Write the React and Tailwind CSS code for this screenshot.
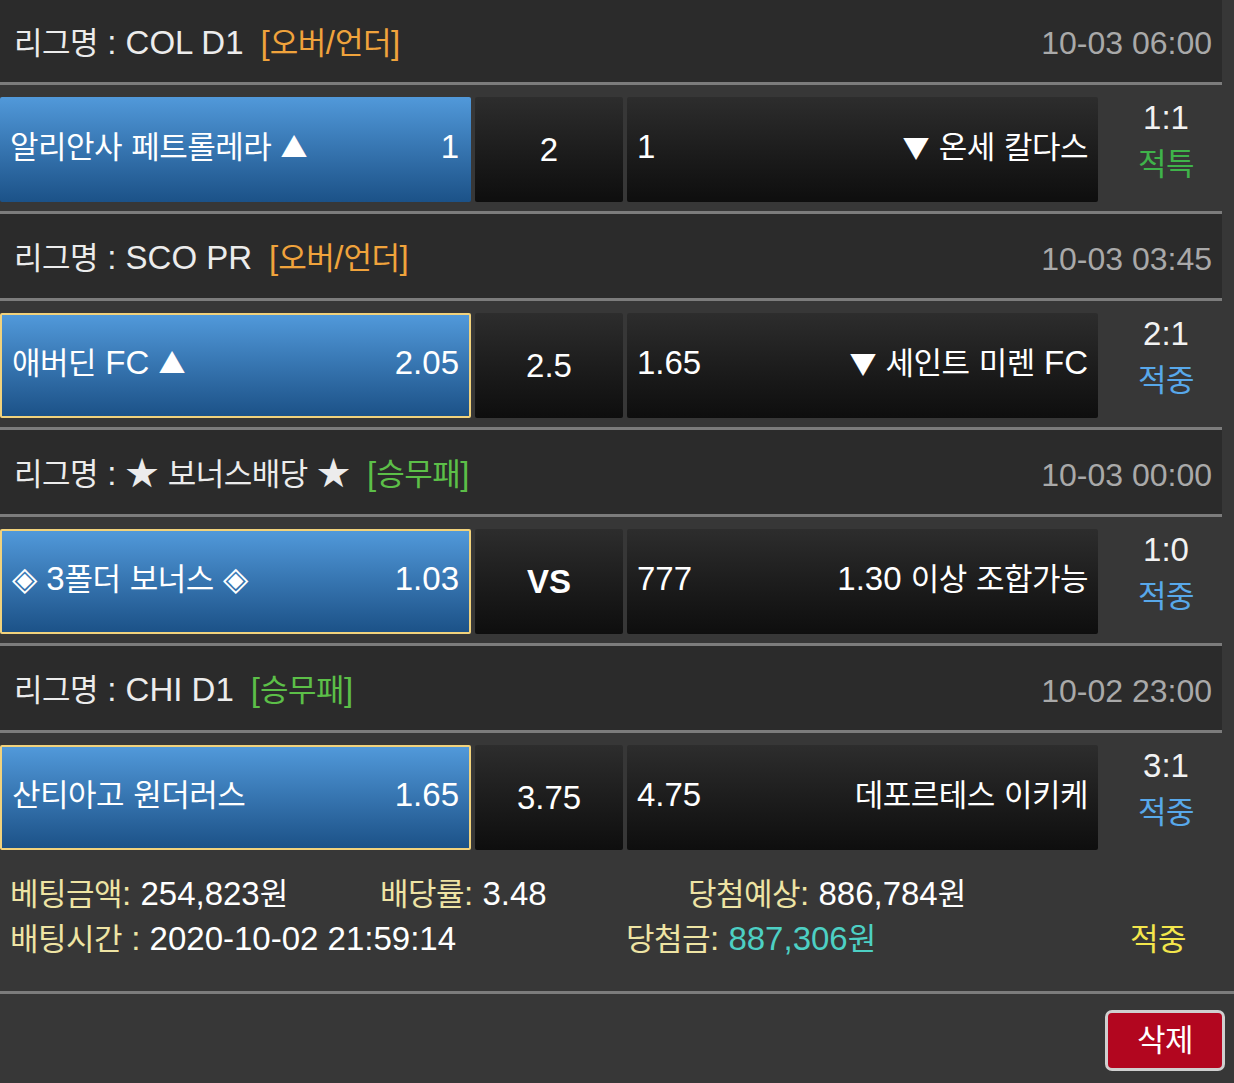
import React from "react";

const SPLIT = /([\uAC00-\uD7A3]+|[▲▼])/;
function K({ t }) {
  return t.split(SPLIT).map((s, i) => {
    if (i % 2 === 0) return <React.Fragment key={i}>{s}</React.Fragment>;
    if (s === "▲" || s === "▼")
      return (
        <span key={i} className="font-['Noto_Sans_CJK_KR'] text-[27px]">
          {s}
        </span>
      );
    return (
      <span key={i} className="text-[31px] tracking-[-0.5px]">
        {s}
      </span>
    );
  });
}

const GREEN = "text-[#5cbf48]";
const ORANGE = "text-[#f0a33c]";

const blocks = [
  {
    league: "COL D1",
    type: "[오버/언더]",
    typeColor: ORANGE,
    date: "10-03 06:00",
    home: "알리안사 페트롤레라 ▲",
    homeOdds: "1",
    draw: "2",
    awayOdds: "1",
    away: "▼ 온세 칼다스",
    score: "1:1",
    status: "적특",
    statusColor: "text-[#3fb34a]",
    selected: false,
  },
  {
    league: "SCO PR",
    type: "[오버/언더]",
    typeColor: ORANGE,
    date: "10-03 03:45",
    home: "애버딘 FC ▲",
    homeOdds: "2.05",
    draw: "2.5",
    awayOdds: "1.65",
    away: "▼ 세인트 미렌 FC",
    score: "2:1",
    status: "적중",
    statusColor: "text-[#58a8ea]",
    selected: true,
  },
  {
    league: "★ 보너스배당 ★",
    type: "[승무패]",
    typeColor: GREEN,
    date: "10-03 00:00",
    home: "◈ 3폴더 보너스 ◈",
    homeOdds: "1.03",
    draw: "VS",
    bold: true,
    awayOdds: "777",
    away: "1.30 이상 조합가능",
    score: "1:0",
    status: "적중",
    statusColor: "text-[#58a8ea]",
    selected: true,
  },
  {
    league: "CHI D1",
    type: "[승무패]",
    typeColor: GREEN,
    date: "10-02 23:00",
    home: "산티아고 원더러스",
    homeOdds: "1.65",
    draw: "3.75",
    awayOdds: "4.75",
    away: "데포르테스 이키케",
    score: "3:1",
    status: "적중",
    statusColor: "text-[#58a8ea]",
    selected: true,
  },
];

function Line() {
  return <div className="h-[3px] w-[1222px] bg-[#7c7c7c]" />;
}

function Block({ b, first, last }) {
  return (
    <div>
      <div
        className={
          "flex w-[1222px] items-center justify-between bg-[#2b2b2b] pl-[14px] pr-[10px] " +
          (first ? "h-[82px] pt-[4px]" : "h-[84px] pt-[5px]")
        }
      >
        <div className="flex items-center text-[#ececec]">
          <span>
            <K t={"리그명 : " + b.league} />
          </span>
          <span className={"ml-[17px] " + b.typeColor}>
            <K t={b.type} />
          </span>
        </div>
        <div className="text-[32px] text-[#a9a9a9]">{b.date}</div>
      </div>
      <Line />
      <div className={"flex pt-[12px] " + (last ? "" : "h-[126px]")}>
        <div
          className={
            "flex h-[105px] w-[471px] items-center justify-between rounded-[2px] bg-gradient-to-b from-[#5199da] to-[#1c5288] pb-[5px] text-white " +
            (b.selected ? "border-2 border-[#f1d27c] pl-[10px] pr-[10px]" : "pl-[10px] pr-[12px]")
          }
        >
          <span>
            <K t={b.home} />
          </span>
          <span>{b.homeOdds}</span>
        </div>
        <div
          className={
            "ml-[4px] flex h-[105px] w-[148px] items-center justify-center rounded-[2px] bg-gradient-to-b from-[#2d2d2d] to-[#0e0e0e] text-white " +
            (b.bold ? "font-bold" : "")
          }
        >
          {b.draw}
        </div>
        <div className="ml-[4px] flex h-[105px] w-[471px] items-center justify-between rounded-[2px] bg-gradient-to-b from-[#2d2d2d] to-[#0e0e0e] pb-[5px] pl-[10px] pr-[10px] text-white">
          <span>{b.awayOdds}</span>
          <span>
            <K t={b.away} />
          </span>
        </div>
        <div className="flex h-[105px] w-[136px] flex-col items-center justify-center pb-[16px] leading-[46px]">
          <span className="text-[#f2f2f2]">{b.score}</span>
          <span className={b.statusColor}>
            <K t={b.status} />
          </span>
        </div>
      </div>
      {!last && <Line />}
    </div>
  );
}

export default function App() {
  return (
    <div
      className="h-[1083px] w-[1234px] overflow-hidden bg-[#373737] text-[33px] leading-[40px] text-white"
      style={{ fontFamily: '"Liberation Sans", "Noto Sans CJK KR", sans-serif' }}
    >
      <div>
        {blocks.map((b, i) => (
          <Block key={i} b={b} first={i === 0} last={i === blocks.length - 1} />
        ))}
      </div>
      <div className="pt-[22px] pb-[29px]">
        <div className="flex h-[45px] items-center pl-[10px]">
          <div className="w-[370px]">
            <span className="text-[#eee4a4]">
              <K t="베팅금액:" />
            </span>{" "}
            <K t="254,823원" />
          </div>
          <div className="w-[308px]">
            <span className="text-[#eee4a4]">
              <K t="배당률:" />
            </span>{" "}
            3.48
          </div>
          <div>
            <span className="text-[#eee4a4]">
              <K t="당첨예상:" />
            </span>{" "}
            <K t="886,784원" />
          </div>
        </div>
        <div className="flex h-[45px] items-center pl-[10px]">
          <div className="w-[616px]">
            <span className="text-[#eee4a4]">
              <K t="배팅시간 :" />
            </span>{" "}
            2020-10-02 21:59:14
          </div>
          <div className="w-[504px]">
            <span className="text-[#eee4a4]">
              <K t="당첨금:" />
            </span>{" "}
            <span className="text-[#4dd0c4]">
              <K t="887,306원" />
            </span>
          </div>
          <div className="text-[#f3e64c]">
            <K t="적중" />
          </div>
        </div>
      </div>
      <div className="h-[3px] w-full bg-[#7c7c7c]" />
      <div className="flex justify-end pr-[9px] pt-[16px]">
        <button className="flex h-[61px] w-[120px] items-center justify-center rounded-[7px] border-[3px] border-[#cfcfcf] bg-[#b2061f] text-white">
          <K t="삭제" />
        </button>
      </div>
    </div>
  );
}
